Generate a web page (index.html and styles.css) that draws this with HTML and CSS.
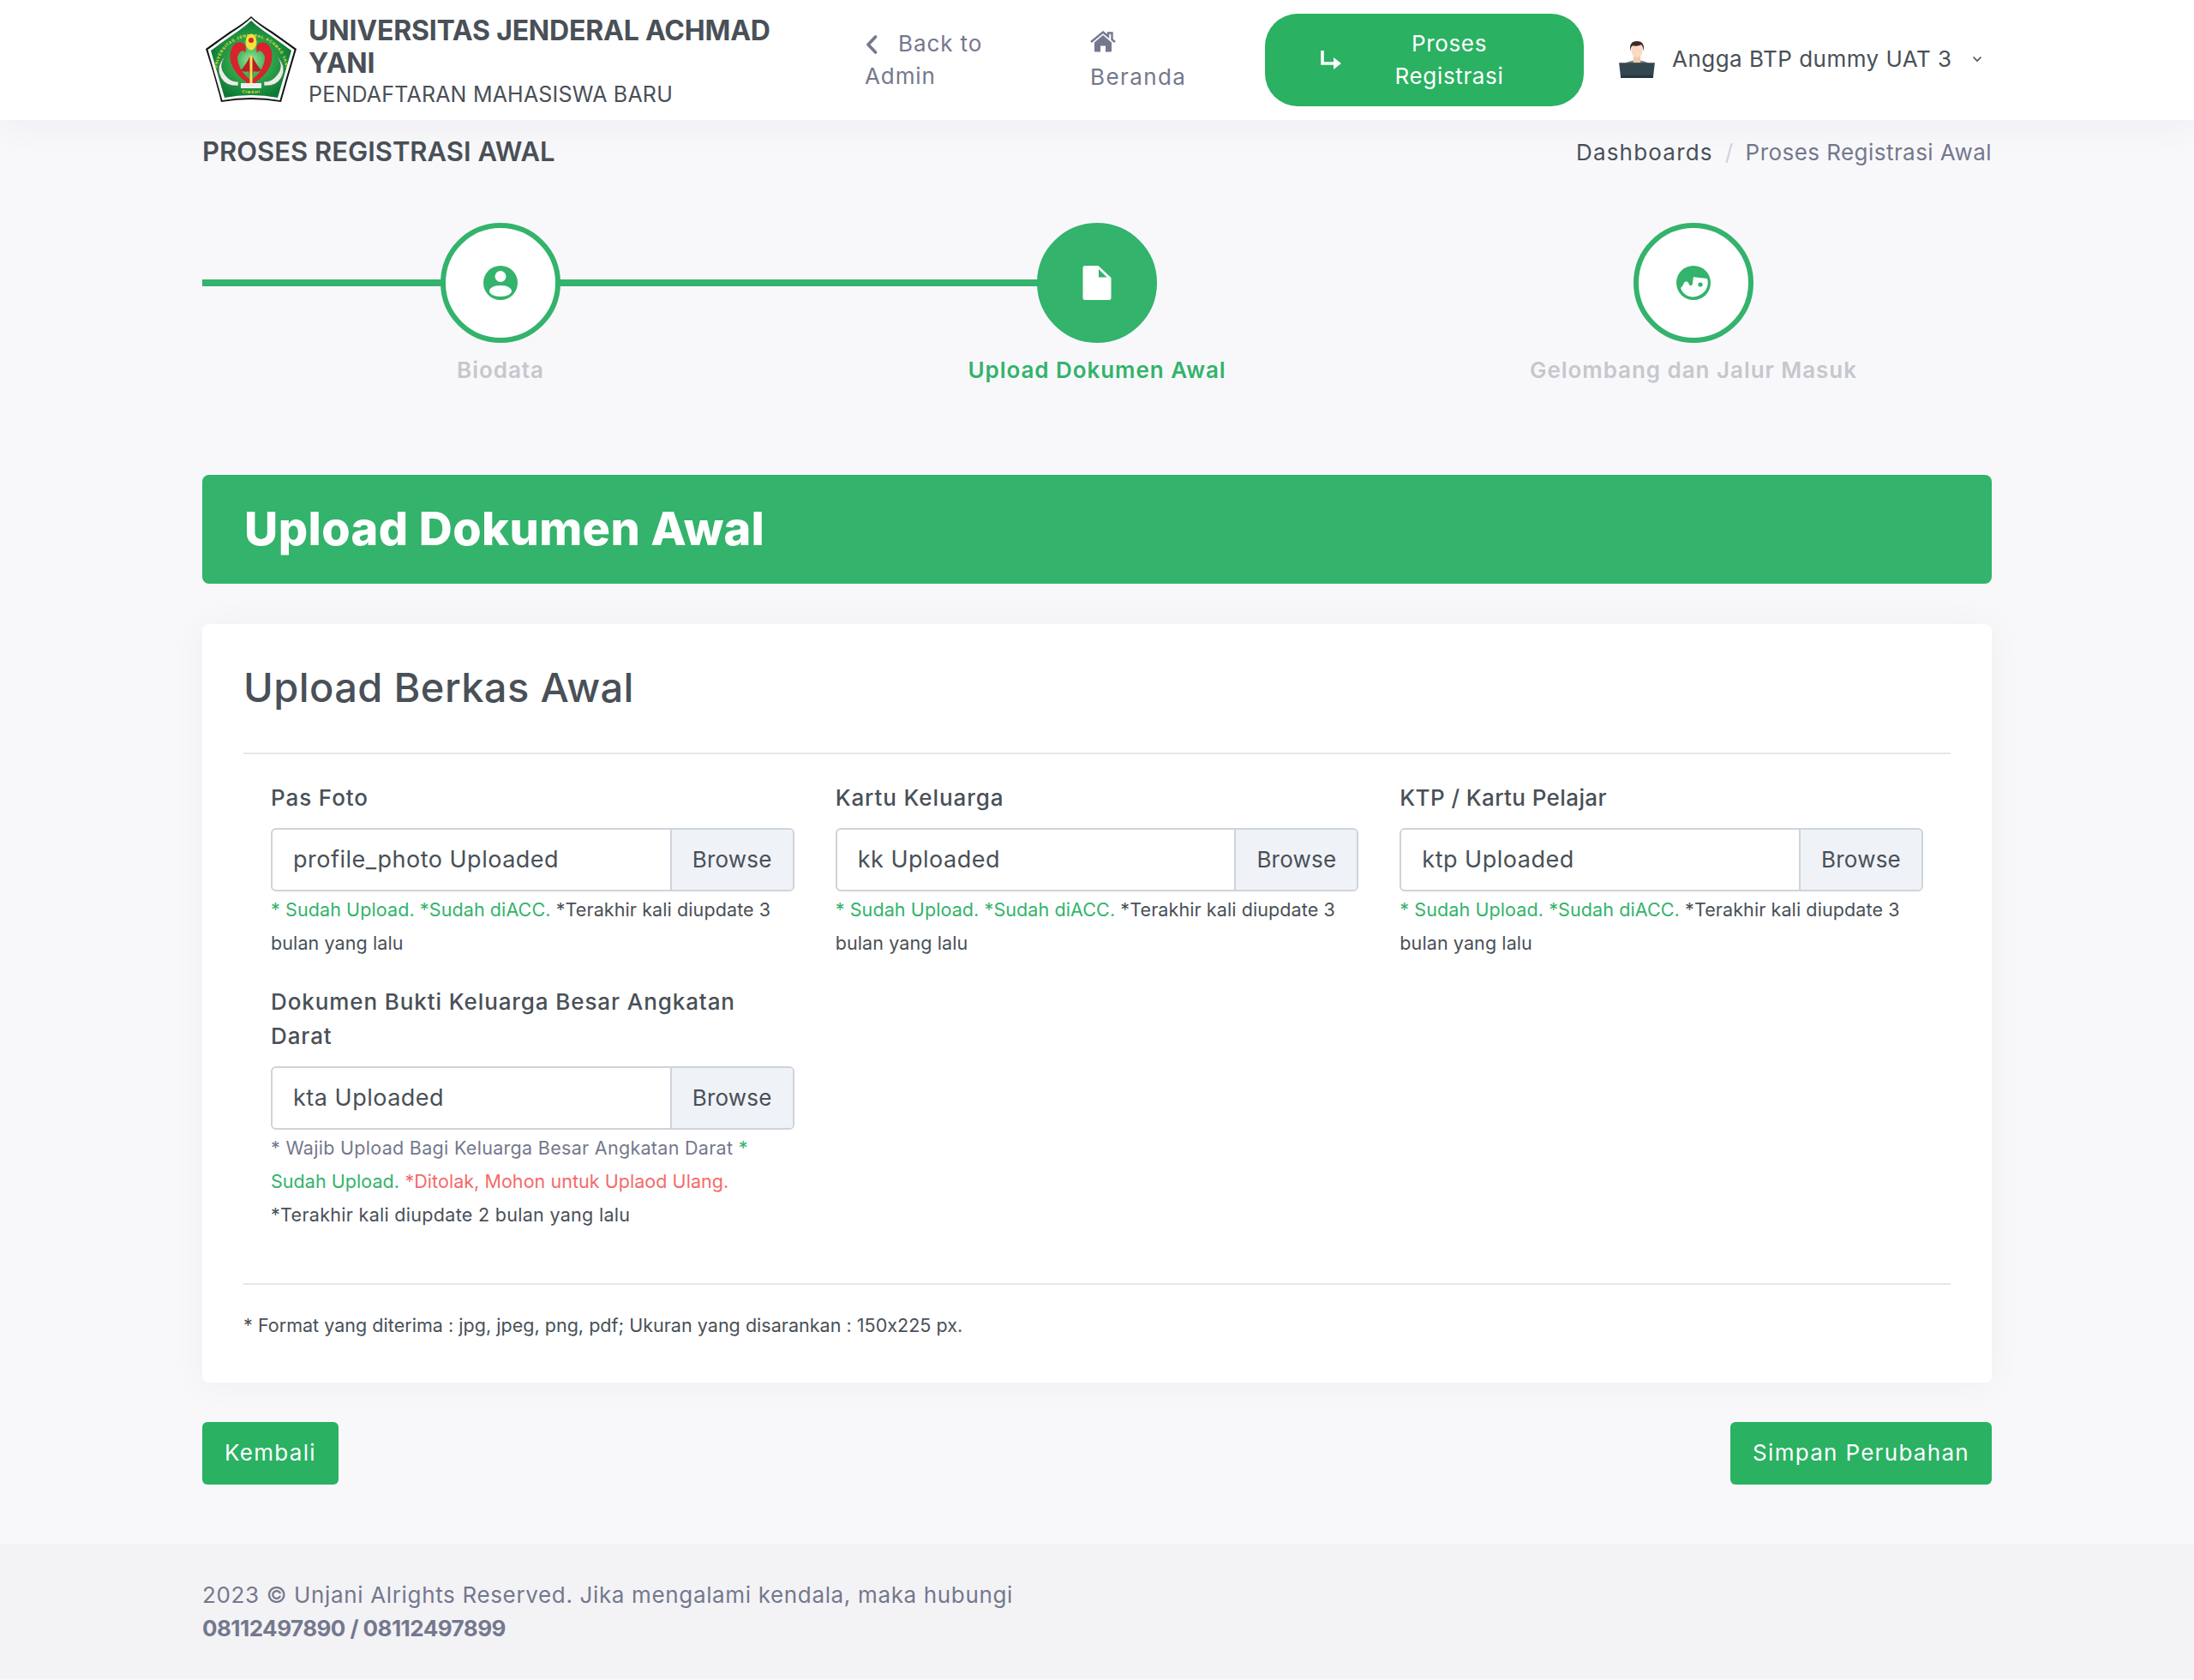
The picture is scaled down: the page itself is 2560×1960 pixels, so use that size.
FILE: index.html
```html
<!DOCTYPE html>
<html lang="id">
<head>
<meta charset="utf-8">
<title>Proses Registrasi Awal</title>
<link rel="stylesheet" href="styles.css">
</head>
<body>
<header class="topbar">
  <div class="wrap topbar-inner">
    <div class="brand">
      <svg class="logo" viewBox="0 0 106 102" aria-hidden="true">
        <defs>
          <radialGradient id="lg" cx="50%" cy="52%" r="52%">
            <stop offset="0" stop-color="#9be8a4"/><stop offset=".4" stop-color="#35ad4e"/><stop offset="1" stop-color="#0b7a35"/>
          </radialGradient>
          <path id="ring" d="M13 64 A40 40 0 1 1 93 64"/>
          <path id="ring2" d="M34 88 Q53 92 72 88"/>
          <g id="half">
            <path d="M24 46 Q13 58 24 70 Q30 77 38 76 L38 81 Q24 82 18 72 Q10 58 24 46Z" fill="#e9efe6" stroke="#4b6a50" stroke-width=".5"/>
            <path d="M45 32 Q38 28 33 33 Q27 40 29 52 Q32 67 52 80 L52 74 Q42 67 38 55 Q35 45 41 41 Q45 39 46 43 Q48 37 45 32Z" fill="#d8222c"/>
            <path d="M52 46 Q46 58 41 63 Q46 66 50 64 L52 72Z" fill="#b91f26"/>
          </g>
        </defs>
        <path d="M53 0 Q60 7 78 18 Q92 28 106 38 Q97 68 88 100 Q53 94 18 100 Q10 68 0 38 Q14 28 28 18 Q46 7 53 0Z" fill="#151515"/>
        <path d="M53 2 Q60 9 77 20 Q90 29 103.500 39 Q95 68 86.500 98 Q53 92 19.500 98 Q11 68 2.500 39 Q16 29 29 20 Q46 9 53 2Z" fill="#fff"/>
        <path d="M53 5 Q60 12 75 22 Q88 31 100 40 Q92 68 84 95 Q53 89 22 95 Q14 68 6 40 Q18 31 31 22 Q46 12 53 5Z" fill="url(#lg)"/>
        <text class="logo-t"><textPath href="#ring" startOffset="50%" text-anchor="middle">UNIVERSITAS JENDERAL ACHMAD YANI</textPath></text>
        <text class="logo-t"><textPath href="#ring2" startOffset="50%" text-anchor="middle">CIMAHI</textPath></text>
        <use href="#half"/>
        <use href="#half" transform="translate(106 0) scale(-1 1)"/>
        <rect x="51.500" y="46" width="3" height="32" fill="#ffe14d"/>
        <rect x="41" y="78" width="24" height="6" fill="#eee"/>
        <ellipse cx="53" cy="30" rx="6.500" ry="9.500" fill="#f4e23a"/>
        <circle cx="53" cy="28" r="3" fill="#d9232e"/>
      </svg>
      <div class="brand-text">
        <div class="brand-name">UNIVERSITAS JENDERAL ACHMAD YANI</div>
        <div class="brand-sub">PENDAFTARAN MAHASISWA BARU</div>
      </div>
    </div>
    <nav class="nav">
      <a class="nav-item nav-back">
        <svg class="ico-chev" viewBox="0 0 16 24" aria-hidden="true"><path d="M12.500 3 4 12l8.500 9" fill="none" stroke="#74788d" stroke-width="3.600" stroke-linecap="round" stroke-linejoin="round"/></svg>Back to<br>Admin
      </a>
      <a class="nav-item nav-home">
        <svg class="ico-home" viewBox="0 0 30 26" aria-hidden="true"><path d="M15 5 5 13.500V23.500q0 1 1 1h6v-7h6v7h6q1 0 1-1V13.500Z" fill="#74788d"/><path d="M1 13 15 1.500l6 5V2.500h4.500V10.200L29 13" fill="none" stroke="#74788d" stroke-width="2.400"/></svg>
        <span class="nav-block">Beranda</span>
      </a>
      <a class="nav-pill">
        <svg class="ico-turn" viewBox="0 0 28 24" aria-hidden="true"><path d="M3 1v15h15" fill="none" stroke="#fff" stroke-width="3.600"/><path d="M16 9l9 7-9 7z" fill="#fff"/></svg>
        <span class="pill-t">Proses Registrasi</span>
      </a>
      <div class="user">
        <svg class="avatar" viewBox="0 0 40 44" aria-hidden="true">
          <path d="M5 32q1-7 9-8l6-1 6 1q8 1 9 8z" fill="#7a7d7c"/>
          <rect x="16" y="17" width="8" height="9" fill="#f3c9ad"/>
          <ellipse cx="20" cy="12" rx="6.500" ry="8" fill="#fbd9c2"/>
          <path d="M12.500 13Q11 2 20 2t7.500 11q-1-6-3-7-4 2-9 1-2.500 1-3 6z" fill="#3d2a28"/>
          <path d="M0 26h40l-2 17H2z" fill="#34474f"/>
          <rect x="2" y="40" width="36" height="3" fill="#26363d"/>
        </svg>
        <span class="user-name">Angga BTP dummy UAT 3</span>
        <svg class="ico-down" viewBox="0 0 12 8" aria-hidden="true"><path d="M1.500 1.500 6 6l4.500-4.500" fill="none" stroke="#495057" stroke-width="1.600"/></svg>
      </div>
    </nav>
  </div>
</header>

<main class="wrap">
  <div class="page-head">
    <h1 class="page-title">PROSES REGISTRASI AWAL</h1>
    <div class="crumbs"><span class="crumb-a">Dashboards</span><span class="crumb-sep">/</span><span>Proses Registrasi Awal</span></div>
  </div>

  <section class="steps">
    <div class="step-line"></div>
    <div class="step done">
      <div class="step-circle">
        <svg class="step-ico" viewBox="0 0 40 40" aria-hidden="true"><path fill-rule="evenodd" d="M20 0a20 20 0 1 1 0 40a20 20 0 0 1 0-40ZM20 6a6.500 6.500 0 1 0 0 13a6.500 6.500 0 0 0 0-13ZM20 23c-9 0-13 3.500-13 6.500 0 3 5 6.500 13 6.500s13-3.500 13-6.500c0-3-4-6.500-13-6.500Z" fill="#33b36b"/></svg>
      </div>
      <div class="step-label">Biodata</div>
    </div>
    <div class="step active">
      <div class="step-circle">
        <svg class="step-ico" viewBox="0 0 33 40" aria-hidden="true"><path fill-rule="evenodd" d="M2.500 0H18v14a0 0 0 0 0 0 0h15v23.500a2.500 2.500 0 0 1-2.500 2.500h-28A2.500 2.500 0 0 1 0 37.500v-35A2.500 2.500 0 0 1 2.500 0ZM18 0l15 14H18z" fill="#fff"/><path d="M18.500 4v9.500h9.500z" fill="#33b36b"/></svg>
      </div>
      <div class="step-label">Upload Dokumen Awal</div>
    </div>
    <div class="step">
      <div class="step-circle">
        <svg class="step-ico" viewBox="0 0 40 40" aria-hidden="true"><circle cx="20" cy="20" r="20" fill="#33b36b"/><path d="M20 13c3 1 10 1 16 2 2 6 0 12-4 16-6 6-15 7-21 3-3-2-5-5-6-8 1-1 3-3 4-6 1-2 4-2 5 0 1 1 1 3 2 3 3 0 3-1 3-4z" fill="#fff"/><circle cx="28" cy="22" r="2.600" fill="#33b36b"/></svg>
      </div>
      <div class="step-label">Gelombang dan Jalur Masuk</div>
    </div>
  </section>

  <div class="banner">Upload Dokumen Awal</div>

  <section class="card">
    <h2 class="card-title">Upload Berkas Awal</h2>
    <hr class="rule">
    <div class="fields">
      <div class="field">
        <div class="field-label">Pas Foto</div>
        <div class="file"><span class="file-name">profile_photo Uploaded</span><span class="file-btn">Browse</span></div>
        <p class="help"><span class="ok">* Sudah Upload. *Sudah diACC.</span> *Terakhir kali diupdate 3 bulan yang lalu</p>
      </div>
      <div class="field">
        <div class="field-label">Kartu Keluarga</div>
        <div class="file"><span class="file-name">kk Uploaded</span><span class="file-btn">Browse</span></div>
        <p class="help"><span class="ok">* Sudah Upload. *Sudah diACC.</span> *Terakhir kali diupdate 3 bulan yang lalu</p>
      </div>
      <div class="field">
        <div class="field-label field-label-tight">KTP / Kartu Pelajar</div>
        <div class="file"><span class="file-name">ktp Uploaded</span><span class="file-btn">Browse</span></div>
        <p class="help"><span class="ok">* Sudah Upload. *Sudah diACC.</span> *Terakhir kali diupdate 3 bulan yang lalu</p>
      </div>
      <div class="field">
        <div class="field-label">Dokumen Bukti Keluarga Besar Angkatan Darat</div>
        <div class="file"><span class="file-name">kta Uploaded</span><span class="file-btn">Browse</span></div>
        <p class="help help-wide"><span class="muted">* Wajib Upload Bagi Keluarga Besar Angkatan Darat</span> <span class="ok">* Sudah Upload.</span> <span class="bad">*Ditolak, Mohon untuk Uplaod Ulang.</span> *Terakhir kali diupdate 2 bulan yang lalu</p>
      </div>
    </div>
    <hr class="rule rule-b">
    <p class="note">* Format yang diterima : jpg, jpeg, png, pdf; Ukuran yang disarankan : 150x225 px.</p>
  </section>

  <div class="actions">
    <a class="btn">Kembali</a>
    <a class="btn">Simpan Perubahan</a>
  </div>
</main>

<footer class="footer">
  <div class="wrap footer-inner">2023 © Unjani Alrights Reserved. Jika mengalami kendala, maka hubungi<br><strong>08112497890 / 08112497899</strong></div>
</footer>
</body>
</html>
```
FILE: styles.css
```css
* { box-sizing: border-box; }
html, body { margin: 0; padding: 0; }
body {
  background: #f8f8fb;
  color: #495057;
  font-family: Inter, "Open Sans", sans-serif;
  font-size: 26px;
  line-height: 39px;
  letter-spacing: .55px;
  font-variant-ligatures: none;
  font-feature-settings: "calt" 0;
}
.wrap { width: 2088px; margin: 0 auto; }

.topbar { background: #fff; height: 140px; box-shadow: 0 4px 40px rgba(18, 38, 63, .05); position: relative; }
.topbar-inner { display: flex; align-items: center; height: 140px; }
.brand { display: flex; align-items: center; width: 773px; }
.logo { width: 106px; height: 102px; margin: 0 14px 0 4px; flex: none; }
.logo-t { font-size: 4.600px; font-weight: 700; fill: #f4e23a; font-family: "Liberation Sans", sans-serif; letter-spacing: .9px; }
.brand-text { width: 560px; padding-top: 5px; }
.brand-name { font-size: 32px; font-weight: 700; line-height: 38px; letter-spacing: -.2px; color: #495057; }
.brand-sub { font-size: 25px; line-height: 35px; font-weight: 400; color: #495057; letter-spacing: .2px; }

.nav { display: flex; align-items: center; flex: 1; }
.nav-item { display: block; color: #74788d; font-size: 26px; line-height: 38px; }
.nav-back { width: 263px; letter-spacing: .9px; }
.ico-chev { width: 16px; height: 24px; margin-right: 23px; vertical-align: -4px; }
.nav-home { width: 204px; padding-top: 5px; letter-spacing: 1.4px; }
.ico-home { display: block; width: 30px; height: 26px; margin-bottom: 9px; }
.nav-block { display: block; }
.nav-pill {
  display: flex; align-items: center; width: 372px; height: 108px;
  background: #2ab162; border-radius: 38px; color: #fff; font-size: 26px; line-height: 38px;
  padding: 0 54px 0 64px; letter-spacing: .65px;
}
.ico-turn { width: 28px; height: 24px; flex: none; }
.pill-t { flex: 1; text-align: center; padding-left: 20px; }
.user { display: flex; align-items: center; margin-left: 41px; font-size: 26px; padding-bottom: 3px; }
.avatar { width: 42px; height: 46px; margin-right: 20px; flex: none; }
.user-name { white-space: nowrap; letter-spacing: .48px; }
.ico-down { width: 12px; height: 8px; margin-left: 23px; }

.page-head { display: flex; justify-content: space-between; align-items: center; height: 74px; }
.page-title { margin: 0; font-size: 31px; font-weight: 600; color: #495057; line-height: 38px; letter-spacing: 0; }
.crumbs { color: #74788d; font-size: 26px; display: flex; letter-spacing: .45px; }
.crumb-a { color: #495057; letter-spacing: 1.2px; }
.crumb-sep { color: #ced4da; margin: 0 14px; }

.steps { position: relative; display: grid; grid-template-columns: repeat(3, 1fr); margin-top: 46px; height: 294px; }
.step-line { position: absolute; left: 0; width: 1044px; top: 66px; height: 8px; background: #33b36b; }
.step { position: relative; display: flex; flex-direction: column; align-items: center; }
.step-circle {
  width: 140px; height: 140px; border-radius: 50%; border: 6px solid #33b36b; background: #fff;
  display: flex; align-items: center; justify-content: center;
}
.step.active .step-circle { background: #33b36b; }
.step-ico { height: 40px; width: 40px; }
.step-label { margin-top: 12px; color: #c6c7cd; font-weight: 600; font-size: 26px; line-height: 39px; letter-spacing: .95px; }
.step.active .step-label { color: #33b36b; }

.banner {
  height: 127px; background: #33b36b; border-radius: 8px; color: #fff;
  font-size: 54px; font-weight: 800; line-height: 125px; padding-left: 49px; letter-spacing: .4px;
}
.card {
  background: #fff; border-radius: 8px; margin-top: 47px; padding: 40px 48px 0;
  height: 885px; box-shadow: 0 2px 40px rgba(18, 38, 63, .04);
}
.card-title { margin: 0; font-size: 47px; font-weight: 500; line-height: 68px; color: #495057; letter-spacing: .4px; }
.rule { border: 0; border-top: 2px solid #e4e6ea; margin: 42px 0 0; }
.fields { display: grid; grid-template-columns: repeat(3, 1fr); column-gap: 48px; padding: 31px 32px 0; height: 617px; align-content: start; }
.field-label { font-weight: 500; font-size: 26px; line-height: 40px; color: #495057; letter-spacing: .9px; }
.field-label-tight { letter-spacing: .4px; }
.file { display: flex; height: 74px; margin-top: 15px; border: 2px solid #ced4da; border-radius: 6px; overflow: hidden; background: #fff; }
.file-name { flex: 1; padding-left: 24px; line-height: 69px; font-size: 27px; color: #495057; letter-spacing: .5px; }
.file-btn { width: 143px; text-align: center; background: #eff2f7; border-left: 2px solid #ced4da; line-height: 69px; font-size: 26px; color: #495057; letter-spacing: .2px; }
.help { margin: 2px 0 29px; font-size: 21.500px; line-height: 39px; color: #495057; letter-spacing: .1px; }
.help-wide { letter-spacing: .3px; }
.help-wide .ok, .help-wide .bad { letter-spacing: .05px; }
.ok { color: #33b36b; }
.bad { color: #f46a6a; }
.muted { color: #74788d; }
.rule-b { margin-top: 0; }
.note { margin: 28px 0 0; font-size: 21.500px; line-height: 39px; color: #495057; letter-spacing: .03px; }

.actions { display: flex; justify-content: space-between; margin-top: 46px; }
.btn { display: block; height: 73px; padding: 0 26px; background: #2ab162; color: #fff; border-radius: 6px; font-size: 26px; line-height: 71px; letter-spacing: 1.3px; }

.footer { background: #f3f3f6; margin-top: 69px; height: 158px; color: #74788d; }
.footer-inner { padding-top: 40px; font-size: 26px; line-height: 39px; letter-spacing: .65px; }
.footer strong { font-weight: 700; letter-spacing: -.55px; }
```
